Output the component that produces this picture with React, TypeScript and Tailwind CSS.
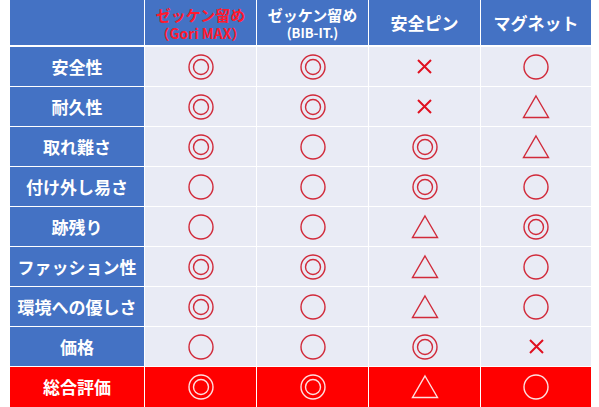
import React from "react";

type Mark = "dbl" | "o" | "tri" | "x";

const rows: { label: string; marks: Mark[] }[] = [
  { label: "安全性", marks: ["dbl", "dbl", "x", "o"] },
  { label: "耐久性", marks: ["dbl", "dbl", "x", "tri"] },
  { label: "取れ難さ", marks: ["dbl", "o", "dbl", "tri"] },
  { label: "付け外し易さ", marks: ["o", "o", "dbl", "o"] },
  { label: "跡残り", marks: ["o", "o", "tri", "dbl"] },
  { label: "ファッション性", marks: ["dbl", "dbl", "tri", "o"] },
  { label: "環境への優しさ", marks: ["dbl", "o", "tri", "o"] },
  { label: "価格", marks: ["o", "o", "dbl", "x"] },
];

const total: Mark[] = ["dbl", "dbl", "tri", "o"];

function Symbol({ m, color }: { m: Mark; color: string }) {
  if (m === "dbl")
    return (
      <svg width="28" height="28" viewBox="0 0 28 28">
        <circle cx="14" cy="14" r="12" fill="none" stroke={color} strokeWidth="1.4" />
        <circle cx="14" cy="14" r="7.5" fill="none" stroke={color} strokeWidth="1.4" />
      </svg>
    );
  if (m === "o")
    return (
      <svg width="28" height="28" viewBox="0 0 28 28">
        <circle cx="14" cy="14" r="12" fill="none" stroke={color} strokeWidth="1.4" />
      </svg>
    );
  if (m === "tri")
    return (
      <svg width="28" height="26" viewBox="0 0 28 26">
        <path d="M14 2 L26.5 23.5 L1.5 23.5 Z" fill="none" stroke={color} strokeWidth="1.4" strokeLinejoin="miter" />
      </svg>
    );
  return (
    <svg width="17" height="17" viewBox="0 0 17 17">
      <path d="M2 2 L15 15 M15 2 L2 15" stroke={color === "#fde0e0" ? color : "#e01020"} strokeWidth="2" />
    </svg>
  );
}

export default function App() {
  const font = { fontFamily: '"Noto Sans CJK JP", "Noto Sans", sans-serif' };
  return (
    <div className="w-[599px] h-[407px] bg-white" style={font}>
      <div className="ml-[10px] w-[579px] flex flex-col">
        {/* header */}
        <div className="grid grid-cols-[134px_111px_111px_111px_110px] gap-px h-[45px]">
          <div className="bg-[#4472c4]" />
          <div className="bg-[#4472c4] flex flex-col items-center justify-center pt-[3px]">
            <span className="text-[#ff1a2e] font-bold text-[15px] leading-[18px]">ゼッケン留め</span>
            <span className="text-[#ff1a2e] font-bold text-[14px] leading-[18px]">（Gori MAX）</span>
          </div>
          <div className="bg-[#4472c4] flex flex-col items-center justify-center pt-[3px]">
            <span className="text-white font-bold text-[15px] leading-[18px]">ゼッケン留め</span>
            <span className="text-white font-bold text-[13px] leading-[18px]">(BIB-IT.)</span>
          </div>
          <div className="bg-[#4472c4] flex items-center justify-center text-white font-bold text-[17px]">安全ピン</div>
          <div className="bg-[#4472c4] flex items-center justify-center text-white font-bold text-[17px]">マグネット</div>
        </div>
        <div className="h-[2px]" />
        <div className="flex flex-col gap-px">
          {rows.map((r) => (
            <div key={r.label} className="grid grid-cols-[134px_111px_111px_111px_110px] gap-px h-[39px]">
              <div className="bg-[#4472c4] flex items-center justify-center text-white font-bold text-[17px]">{r.label}</div>
              {r.marks.map((m, i) => (
                <div key={i} className="bg-[#e9ebf5] flex items-center justify-center">
                  <Symbol m={m} color="#d12a3a" />
                </div>
              ))}
            </div>
          ))}
          <div className="grid grid-cols-[134px_111px_111px_111px_110px] gap-px h-[40px]">
            <div className="bg-[#ff0000] flex items-center justify-center text-white font-bold text-[17px]">総合評価</div>
            {total.map((m, i) => (
              <div key={i} className="bg-[#ff0000] flex items-center justify-center">
                <Symbol m={m} color="#fde0e0" />
              </div>
            ))}
          </div>
        </div>
      </div>
    </div>
  );
}
